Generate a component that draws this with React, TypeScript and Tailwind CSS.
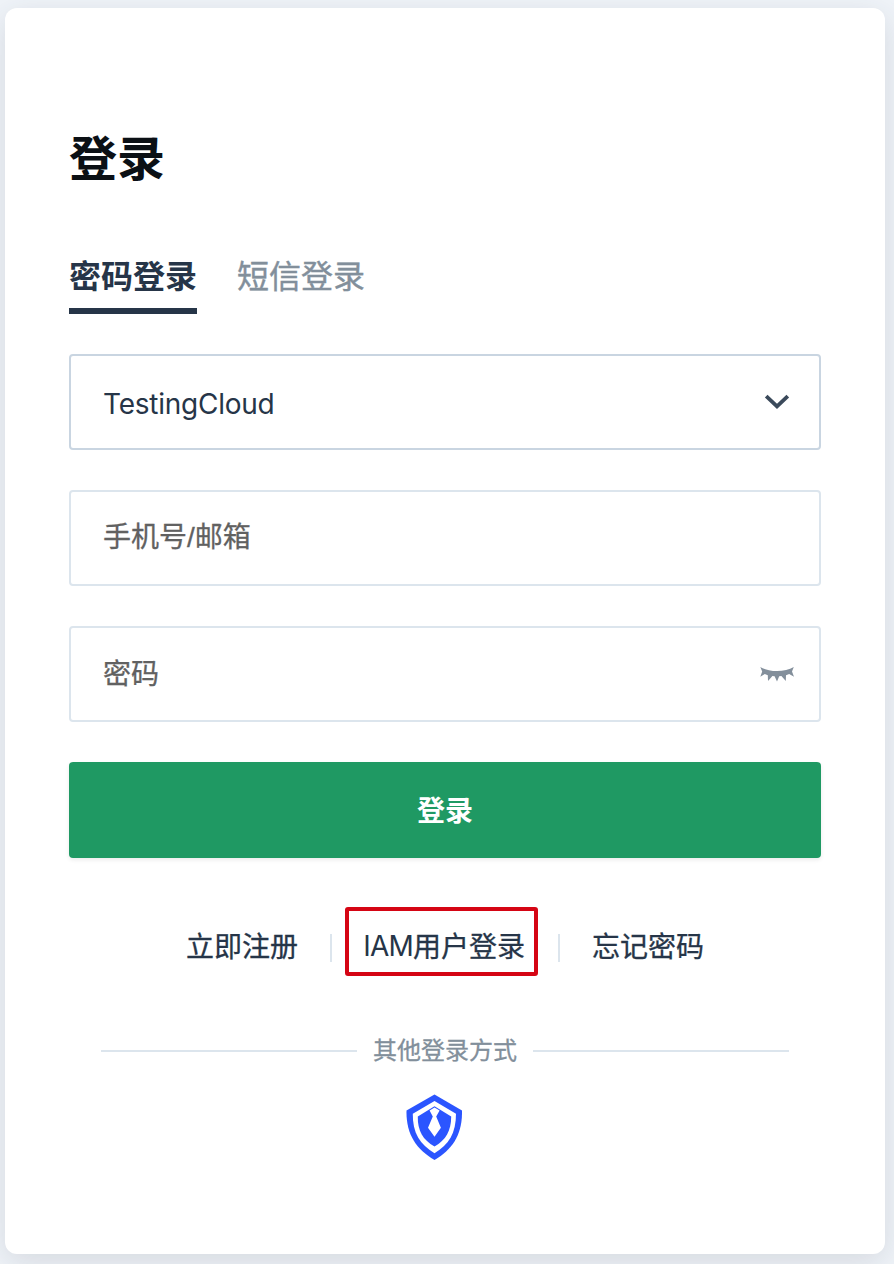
import React from "react";

const cjk = "font-['Noto_Sans_CJK_SC',sans-serif]";
const latin = "font-['Inter','Noto_Sans_CJK_SC',sans-serif]";
const field = "font-['Liberation_Sans','Noto_Sans_CJK_SC',sans-serif]";

function ChevronIcon() {
  return (
    <svg width="28" height="20" viewBox="0 0 28 20" fill="none" aria-hidden="true">
      <path d="M3.2 4.2L14 14.4L24.8 4.2" stroke="#3b4a5b" strokeWidth="3.8" />
    </svg>
  );
}

function ClosedEyeIcon() {
  return (
    <svg width="36" height="20" viewBox="0 0 36 20" aria-hidden="true">
      <path
        d="M1.3 3C10 8.4 26 8.4 34.8 3L33 7.6L35 12.7L30.2 10L27 11.2L26.8 17L22.4 12L20.2 12.3L18 17.6L15.6 12.3L13.4 12L9 17L8.8 11.2L5.8 10L1.3 12.7L3.2 7.6Z"
        fill="#838f9b"
      />
    </svg>
  );
}

function ShieldIcon() {
  return (
    <svg width="56" height="66" viewBox="0 0 56 66" aria-hidden="true">
      <path d="M28.5 0.5L56 16.5C56.5 40 47 55 28.5 66C10 55 0 40 0.5 16.5Z" fill="#2b55ff" />
      <path d="M28.5 7L50 19.7C50 39 43 50.3 28.5 59.2C14 50.3 6.5 39 6.8 19.7Z" fill="#fff" />
      <path d="M28.5 12.2L45.2 22.5C45.2 37 39.8 45.8 28.5 52.6C17 45.8 11.5 37 11.8 22.5Z" fill="#2b55ff" />
      <path d="M23.6 16.5L28.5 13.6L33.6 16.5L30.2 22.6L34.9 33.8L28.5 42.8L22 33.8L26.8 22.6Z" fill="#fff" />
    </svg>
  );
}

export default function App() {
  return (
    <div className={`h-[1264px] w-[894px] overflow-hidden bg-[#f0f4f9] pt-2 pl-[5px] text-[#263548] ${cjk}`}>
      <main className="flex h-[1246px] w-[880px] flex-col rounded-[12px] bg-white px-16 pt-[115px] shadow-[0_8px_32px_rgba(40,50,65,0.14)]">
        <h1 className="h-16 text-[48px] leading-[64px] font-bold text-[#0b1015]">登录</h1>

        <div className="mt-[63px] flex h-16 gap-10 text-[32px] leading-[48px]" role="tablist">
          <button role="tab" aria-selected="true" className="flex h-16 flex-col border-b-[6px] border-[#263548] font-bold">
            密码登录
          </button>
          <button role="tab" aria-selected="false" className="flex h-16 flex-col text-[#828f9b] [-webkit-text-stroke:0.4px]">
            短信登录
          </button>
        </div>

        <form className="mt-10 flex flex-col gap-10 text-[28px]" onSubmit={(e) => e.preventDefault()}>
          <button type="button" className="flex h-24 items-center justify-between rounded-[4px] border-2 border-[#c9d5e1] pr-[28px] pl-8">
            <span className={`pt-1 text-[28px] tracking-[-0.24px] ${latin}`}>TestingCloud</span>
            <ChevronIcon />
          </button>
          <div className="flex h-24 items-center rounded-[4px] border-2 border-[#dce5ed] px-8">
            <input placeholder="手机号/邮箱" className={`h-12 w-full outline-none [-webkit-text-stroke:0.3px] placeholder:text-[#616161] ${field}`} />
          </div>
          <div className="flex h-24 items-center rounded-[4px] border-2 border-[#dce5ed] pr-6 pl-8">
            <input type="password" placeholder="密码" className="mb-1 h-12 min-w-0 flex-1 outline-none [-webkit-text-stroke:0.3px] placeholder:text-[#616161]" />
            <ClosedEyeIcon />
          </div>
          <button type="submit" className="flex h-24 items-center justify-center rounded-[4px] bg-[#1f9963] pb-[2px] font-bold text-white shadow-[0_2px_4px_rgba(0,0,0,0.08)]">
            登录
          </button>
        </form>

        <nav className="mt-[49px] flex h-[69px] items-center pl-[117px] text-[28px] leading-[40px] whitespace-nowrap">
          <a className="w-28 pt-[6px] [-webkit-text-stroke:0.3px]">立即注册</a>
          <span className="mt-3 ml-8 h-7 w-[2px] bg-[#dce5ed]" />
          <a className="ml-[13px] flex h-[69px] w-[193px] items-center justify-end rounded-[3px] border-4 border-[#d50514] pt-[6px] pr-[9px]">
            <span className={`pt-[2px] tracking-[-0.8px] ${latin}`}>IAM</span>
            <span className="[-webkit-text-stroke:0.3px]">用户登录</span>
          </a>
          <span className="mt-3 ml-5 h-7 w-[2px] bg-[#dce5ed]" />
          <a className="ml-8 w-28 pt-[6px] [-webkit-text-stroke:0.3px]">忘记密码</a>
        </nav>

        <div className="mx-8 mt-[59px] flex h-8 items-center gap-4 text-[24px] leading-8 text-[#828f9b]">
          <span className="h-[2px] flex-1 bg-[#dce5ed]" />
          <span className="pb-1 [-webkit-text-stroke:0.3px]">其他登录方式</span>
          <span className="h-[2px] flex-1 bg-[#dce5ed]" />
        </div>

        <button className="mt-[27px] ml-[337px] h-[66px] w-14">
          <ShieldIcon />
        </button>
      </main>
    </div>
  );
}
